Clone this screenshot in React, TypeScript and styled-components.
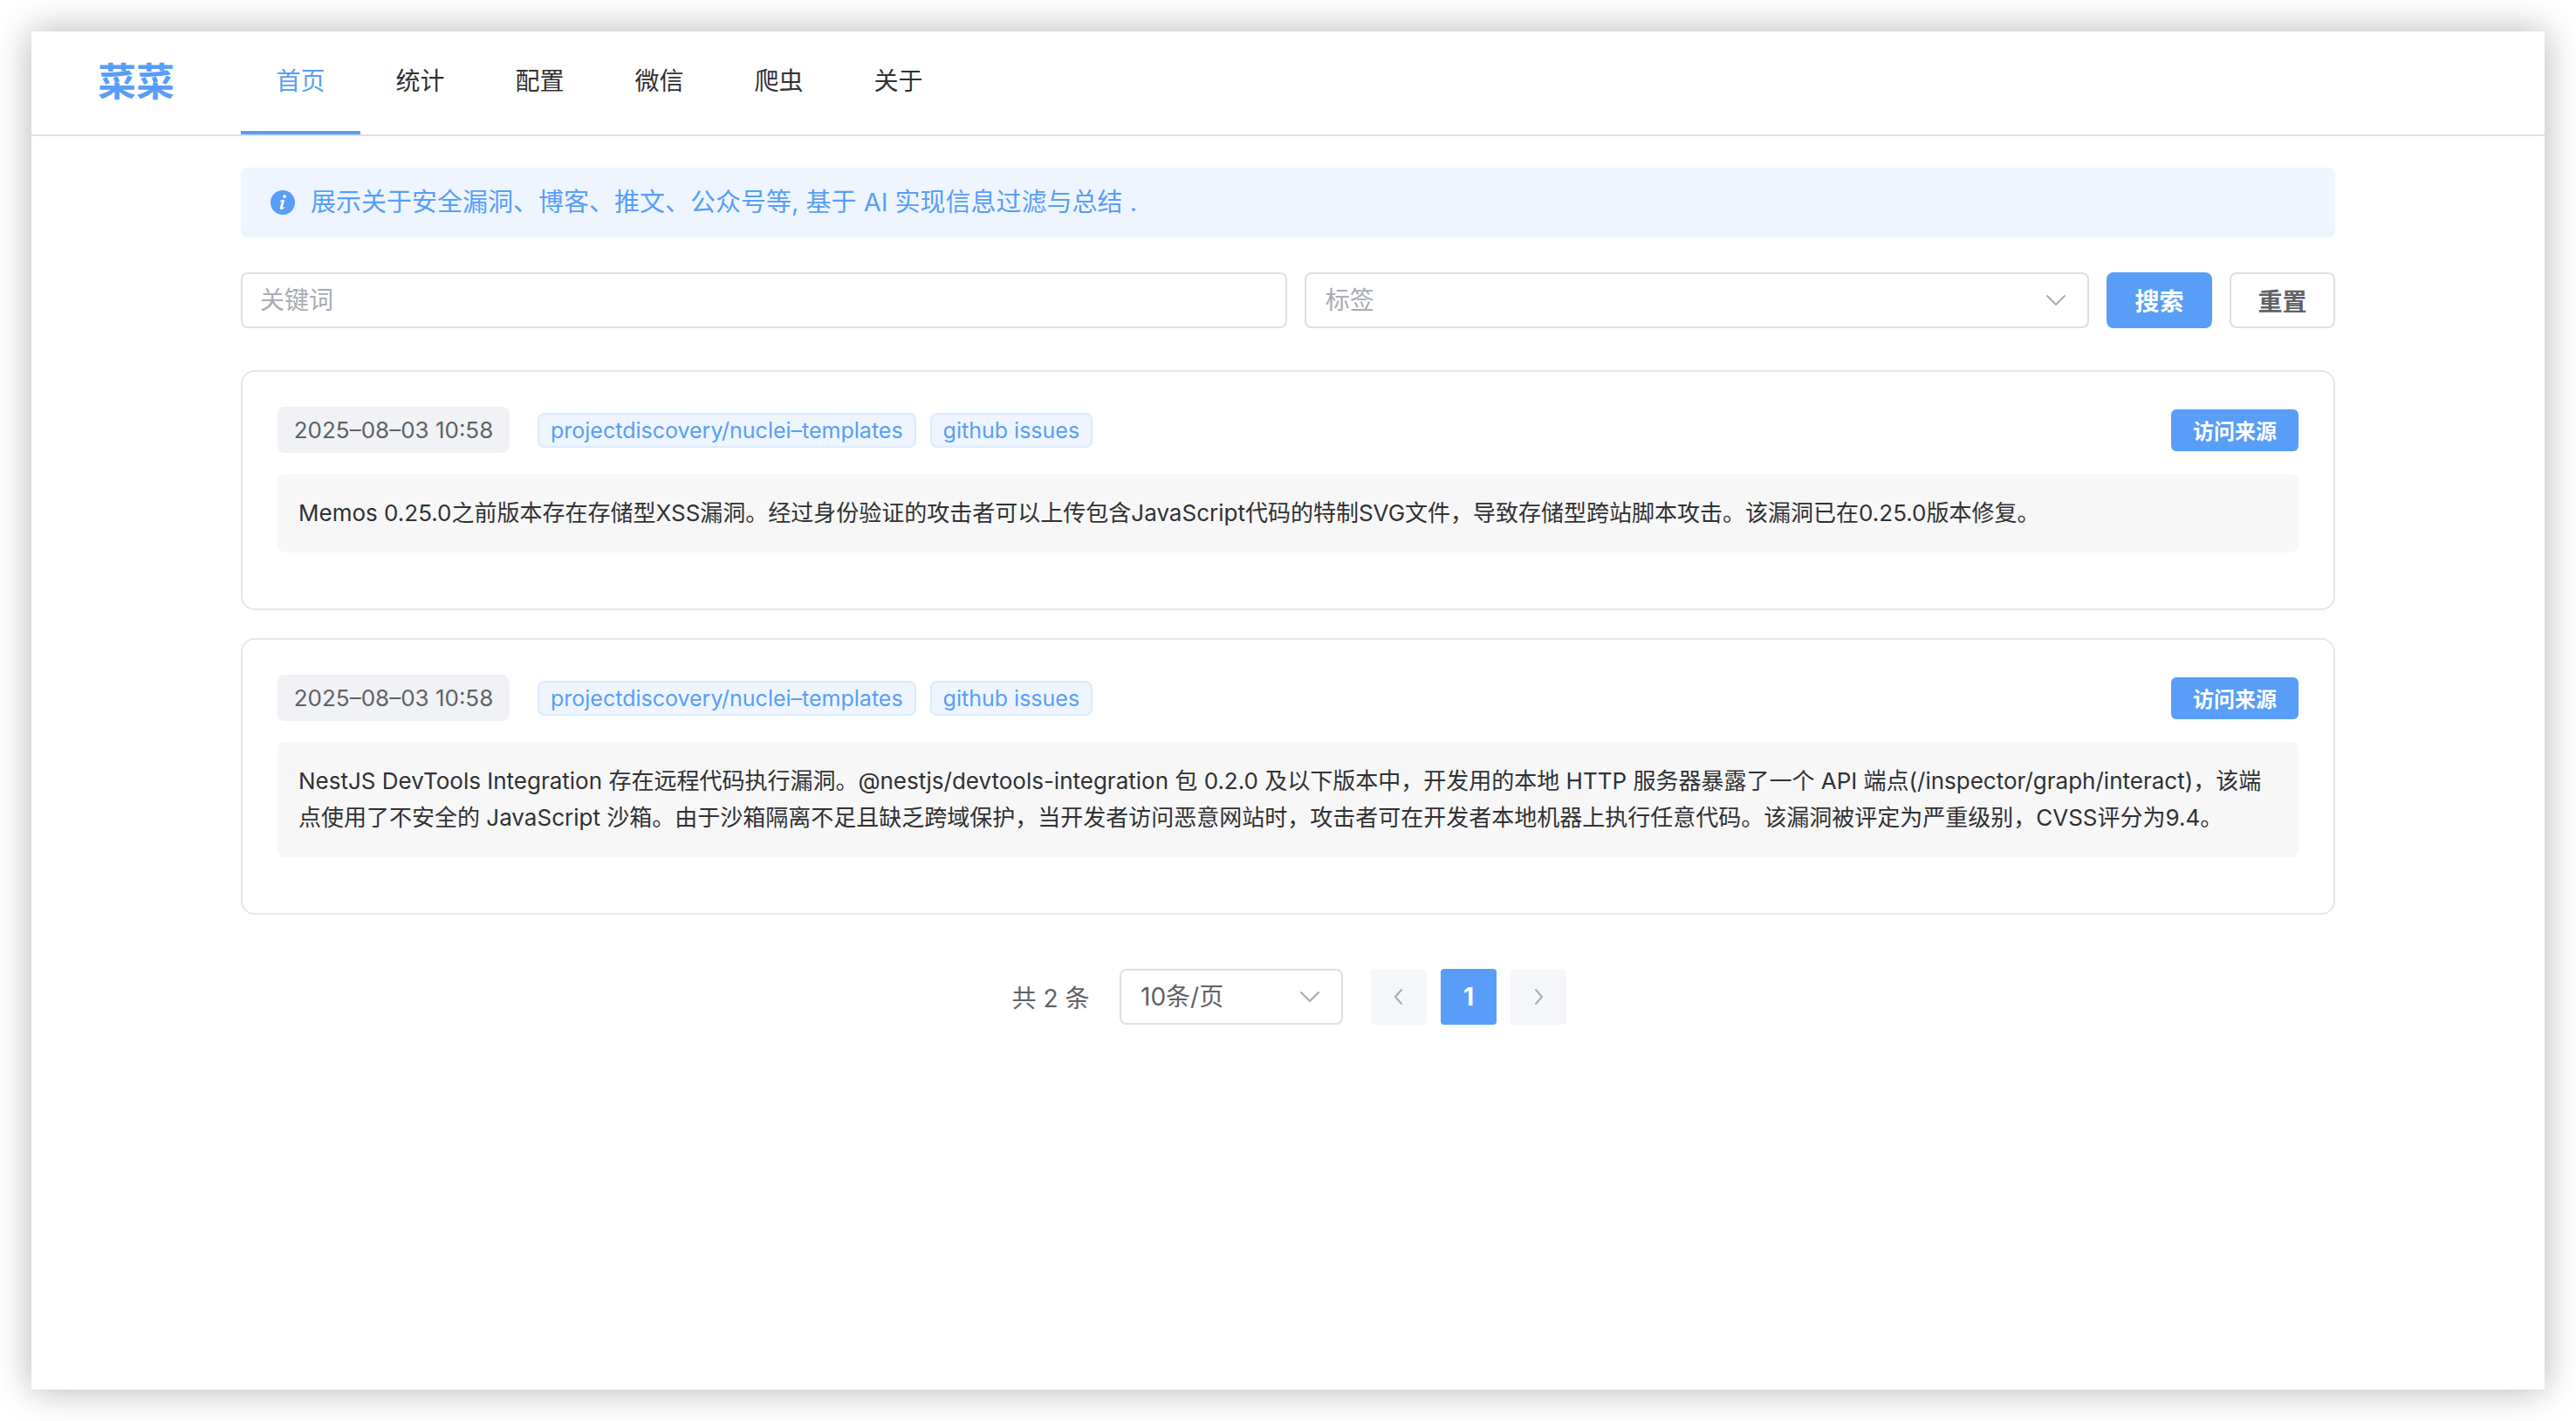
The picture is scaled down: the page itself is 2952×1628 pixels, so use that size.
import React from "react";
import styled, { createGlobalStyle } from "styled-components";

const c = {
  primary: "#589ef8",
  primaryBg: "#eef5fe",
  primaryBorder: "#dcebfd",
  text: "#303133",
  regular: "#606266",
  placeholder: "#a8abb2",
  border: "#dcdfe6",
  cardBorder: "#e4e7ed",
};

const GlobalStyle = createGlobalStyle`
  * { box-sizing: border-box; }
  body {
    margin: 0;
    background: #ffffff;
    color: ${c.text};
    font-family: Inter, "Noto Sans CJK SC", sans-serif;
    font-size: 28px;
  }
  button, input, select { font: inherit; margin: 0; }
`;

const Frame = styled.div`
  padding: 36px;
`;

const Window = styled.div`
  min-height: calc(100vh - 72px);
  background: #ffffff;
  box-shadow: 0 0 40px rgba(0, 0, 0, 0.3);
`;

const Header = styled.header`
  display: flex;
  height: 120px;
  border-bottom: 2px solid ${c.border};
`;

const Logo = styled.a`
  width: 240px;
  flex: none;
  color: ${c.primary};
  font-size: 44px;
  font-weight: 700;
  line-height: 116px;
  text-align: center;
  text-decoration: none;
`;

const Nav = styled.nav`
  display: flex;
`;

const NavLink = styled.a<{ $active?: boolean }>`
  min-width: 137px;
  padding: 0 40px;
  line-height: 114px;
  text-align: center;
  color: ${(p) => (p.$active ? c.primary : c.text)};
  border-bottom: 4px solid ${(p) => (p.$active ? c.primary : "transparent")};
  text-decoration: none;
`;

const Main = styled.main`
  max-width: 2400px;
  margin: 0 auto;
  padding: 36px 0;
`;

const Alert = styled.div`
  display: flex;
  align-items: center;
  gap: 18px;
  height: 80px;
  padding: 0 34px;
  border-radius: 8px;
  background: ${c.primaryBg};
  color: ${c.primary};
  font-size: 29px;
  line-height: 40px;
`;

const Filters = styled.form`
  display: grid;
  grid-template-columns: 4fr 3fr 121px 121px;
  gap: 20px;
  margin: 40px 0 48px;
`;

const TextInput = styled.input`
  width: 100%;
  height: 64px;
  padding: 0 20px;
  border: 2px solid ${c.border};
  border-radius: 8px;
  background: #ffffff;
  color: ${c.regular};
  outline: none;
  &::placeholder { color: ${c.placeholder}; opacity: 1; }
`;

const SelectWrap = styled.div<{ $width?: string }>`
  position: relative;
  width: ${(p) => p.$width ?? "100%"};
`;

const SelectBox = styled.select<{ $muted?: boolean }>`
  appearance: none;
  width: 100%;
  height: 64px;
  padding: 0 64px 0 22px;
  border: 2px solid ${c.border};
  border-radius: 8px;
  background: #ffffff;
  color: ${(p) => (p.$muted ? c.placeholder : c.regular)};
  outline: none;
`;

const SelectArrow = styled.svg`
  position: absolute;
  top: 18px;
  right: 24px;
  pointer-events: none;
`;

const Button = styled.button<{ $primary?: boolean; $small?: boolean }>`
  height: ${(p) => (p.$small ? 48 : 64)}px;
  min-width: ${(p) => (p.$small ? 146 : 121)}px;
  padding: 0;
  border: ${(p) => (p.$primary ? "none" : `2px solid ${c.border}`)};
  border-radius: ${(p) => (p.$small ? 6 : 8)}px;
  background: ${(p) => (p.$primary ? c.primary : "#ffffff")};
  color: ${(p) => (p.$primary ? "#ffffff" : c.regular)};
  font-size: ${(p) => (p.$small ? 24 : 28)}px;
  font-weight: 700;
`;

const List = styled.div`
  display: grid;
  gap: 32px;
`;

const Card = styled.article`
  padding: 40px 40px 64px;
  border: 2px solid ${c.cardBorder};
  border-radius: 16px;
`;

const CardHead = styled.div`
  display: flex;
  align-items: center;
  margin-bottom: 24px;
`;

const DateLabel = styled.time`
  min-width: 266px;
  padding: 0 16px;
  margin-right: 32px;
  border-radius: 8px;
  background: #f0f2f5;
  color: ${c.regular};
  font-size: 26px;
  line-height: 53px;
  text-align: center;
`;

const Tags = styled.div`
  display: flex;
  flex: 1;
  gap: 16px;
`;

const Tag = styled.span`
  padding: 0 13px;
  border: 2px solid ${c.primaryBorder};
  border-radius: 8px;
  background: ${c.primaryBg};
  color: ${c.primary};
  font-size: 25px;
  line-height: 36px;
`;

const Summary = styled.p`
  margin: 0;
  padding: 24px;
  border-radius: 8px;
  background: #f7f7f7;
  font-size: 26px;
  line-height: 42px;
`;

const Pagination = styled.nav`
  display: flex;
  align-items: center;
  justify-content: center;
  margin-top: 62px;
  gap: 32px;
  color: ${c.regular};
`;

const Total = styled.span`
  min-width: 94px;
  text-align: center;
`;

const Pages = styled.div`
  display: flex;
  gap: 16px;
`;

const PageButton = styled.button<{ $active?: boolean }>`
  display: grid;
  place-items: center;
  width: 64px;
  height: 64px;
  padding: 0;
  border: none;
  border-radius: 4px;
  background: ${(p) => (p.$active ? c.primary : "#f5f7fa")};
  color: ${(p) => (p.$active ? "#ffffff" : c.placeholder)};
  font-weight: 700;
`;

const InfoIcon = () => (
  <svg width="28" height="28" viewBox="0 0 28 28" aria-hidden="true">
    <circle cx="14" cy="14" r="14" fill={c.primary} />
    <circle cx="16" cy="7" r="2" fill="#fff" />
    <path d="M10.6 12.6c1.4-1.2 2.8-1.9 4-1.9 1.3 0 1.5 1 1.1 2.4l-1.8 6.2c-.2.8 0 1 .4.8.6-.2 1.2-.8 1.8-1.4l.5.5c-1.4 1.8-3 2.9-4.5 2.9-1.3 0-1.7-1-1.2-2.5l1.8-6.1c.2-.7 0-.9-.4-.7-.4.1-.8.4-1.2.7z" fill="#fff" />
  </svg>
);

const Chevron = () => (
  <SelectArrow width="28" height="28" viewBox="0 0 28 28" fill="none" aria-hidden="true">
    <path d="M4 9 14 19 24 9" stroke={c.placeholder} strokeWidth="2" strokeLinecap="round" strokeLinejoin="round" />
  </SelectArrow>
);

const Arrow = ({ d }: { d: string }) => (
  <svg width="24" height="24" viewBox="0 0 24 24" fill="none" aria-hidden="true">
    <path d={d} stroke={c.placeholder} strokeWidth="2" strokeLinecap="round" strokeLinejoin="round" />
  </svg>
);

const menu = ["首页", "统计", "配置", "微信", "爬虫", "关于"];

const items = [
  {
    id: 1,
    date: "2025–08–03 10:58",
    tags: ["projectdiscovery/nuclei–templates", "github issues"],
    summary:
      "Memos 0.25.0之前版本存在存储型XSS漏洞。经过身份验证的攻击者可以上传包含JavaScript代码的特制SVG文件，导致存储型跨站脚本攻击。该漏洞已在0.25.0版本修复。",
  },
  {
    id: 2,
    date: "2025–08–03 10:58",
    tags: ["projectdiscovery/nuclei–templates", "github issues"],
    summary:
      "NestJS DevTools Integration 存在远程代码执行漏洞。@nestjs/devtools-integration 包 0.2.0 及以下版本中，开发用的本地 HTTP 服务器暴露了一个 API 端点(/inspector/graph/interact)，该端点使用了不安全的 JavaScript 沙箱。由于沙箱隔离不足且缺乏跨域保护，当开发者访问恶意网站时，攻击者可在开发者本地机器上执行任意代码。该漏洞被评定为严重级别，CVSS评分为9.4。",
  },
];

export default function App() {
  return (
    <Frame lang="zh-CN">
      <GlobalStyle />
      <Window>
        <Header>
          <Logo href="#">菜菜</Logo>
          <Nav>
            {menu.map((m, i) => (
              <NavLink key={m} href="#" $active={i === 0}>{m}</NavLink>
            ))}
          </Nav>
        </Header>
        <Main>
          <Alert role="note">
            <InfoIcon />
            <span>展示关于安全漏洞、博客、推文、公众号等, 基于 AI 实现信息过滤与总结 .</span>
          </Alert>
          <Filters onSubmit={(e) => e.preventDefault()}>
            <TextInput type="text" placeholder="关键词" aria-label="关键词" />
            <SelectWrap>
              <SelectBox $muted aria-label="标签">
                <option>标签</option>
              </SelectBox>
              <Chevron />
            </SelectWrap>
            <Button type="submit" $primary>搜索</Button>
            <Button type="reset">重置</Button>
          </Filters>
          <List>
            {items.map((item) => (
              <Card key={item.id}>
                <CardHead>
                  <DateLabel>{item.date}</DateLabel>
                  <Tags>
                    {item.tags.map((t) => <Tag key={t}>{t}</Tag>)}
                  </Tags>
                  <Button type="button" $primary $small>访问来源</Button>
                </CardHead>
                <Summary>{item.summary}</Summary>
              </Card>
            ))}
          </List>
          <Pagination aria-label="分页">
            <Total>共 2 条</Total>
            <SelectWrap $width="256px">
              <SelectBox aria-label="每页条数">
                <option>10条/页</option>
              </SelectBox>
              <Chevron />
            </SelectWrap>
            <Pages>
              <PageButton type="button" disabled aria-label="上一页"><Arrow d="M15 4 8 12 15 20" /></PageButton>
              <PageButton type="button" $active aria-current="page">1</PageButton>
              <PageButton type="button" disabled aria-label="下一页"><Arrow d="M9 4 16 12 9 20" /></PageButton>
            </Pages>
          </Pagination>
        </Main>
      </Window>
    </Frame>
  );
}
